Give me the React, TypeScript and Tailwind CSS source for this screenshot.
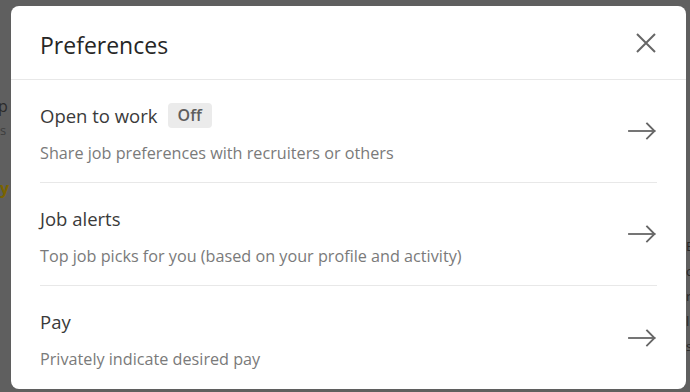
import React from "react";

const rows = [
  { title: "Open to work", badge: "Off", desc: "Share job preferences with recruiters or others" },
  { title: "Job alerts", desc: "Top job picks for you (based on your profile and activity)" },
  { title: "Pay", desc: "Privately indicate desired pay" },
];

const ArrowIcon = () => (
  <svg width="28" height="20" viewBox="0 0 28 20" fill="none" stroke="#666666" strokeWidth="1.8" strokeLinecap="square">
    <path d="M1 10H26.5" />
    <path d="M19 2.5L26.5 10L19 17.5" />
  </svg>
);

const CloseIcon = () => (
  <svg width="20" height="20" viewBox="0 0 20 20" fill="none" stroke="#666666" strokeWidth="2">
    <path d="M1 1L19 19M19 1L1 19" />
  </svg>
);

export default function App() {
  return (
    <div
      className="relative w-[690px] h-[392px] overflow-hidden bg-[#5f5f5f]"
      style={{ fontFamily: '"Open Sans", "Noto Sans", sans-serif' }}
    >
      {/* dimmed page behind the dialog */}
      <div className="flex h-full justify-between text-[#2b2b2b]">
        <div className="flex flex-col w-[11px] pt-[94px] text-[16px] leading-[24px]">
          <span className="-ml-[2px]">p</span>
          <span className="text-[13px] text-[#3d3d3d]">s</span>
          <span className="mt-[34px] text-[#7a6300] font-bold">y</span>
        </div>
        <div className="flex flex-col w-[4px] pt-[234px] text-[13px] leading-[25px] text-[#262626]">
          <span>B</span>
          <span>c</span>
          <span>r</span>
          <span>l</span>
          <span>s</span>
        </div>
      </div>

      {/* dialog */}
      <div className="absolute left-[11px] top-[6px] w-[675px] h-[383px] bg-white rounded-[8px] flex flex-col">
        <div className="h-[74px] flex items-center justify-between pl-[29px] pr-[30px] border-b border-[#e8e8e8]">
          <h2 className="text-[23px] leading-[30px] text-[#262626] pt-[4px]">Preferences</h2>
          <button type="button" aria-label="Close" className="flex items-center justify-center">
            <CloseIcon />
          </button>
        </div>

        <ul className="flex flex-col px-[29px]">
          {rows.map((row, i) => (
            <li
              key={row.title}
              className={
                "h-[103px] flex items-center justify-between " +
                (i < rows.length - 1 ? "border-b border-[#e8e8e8]" : "")
              }
            >
              <div className="flex flex-col pt-[4px]">
                <div className="flex items-center h-[25px]">
                  <span className="text-[18.5px] leading-[25px] text-[#3a3a3a]">{row.title}</span>
                  {row.badge && (
                    <span className="ml-[10px] px-[10px] h-[25px] flex items-center rounded-[4px] bg-[#ebebeb] text-[16px] font-semibold text-[#5e5e5e]">
                      {row.badge}
                    </span>
                  )}
                </div>
                <p className="mt-[14px] text-[16.2px] leading-[22px] text-[#7a7a7a]">{row.desc}</p>
              </div>
              <div className="pr-[1px]">
                <ArrowIcon />
              </div>
            </li>
          ))}
        </ul>
      </div>
    </div>
  );
}
